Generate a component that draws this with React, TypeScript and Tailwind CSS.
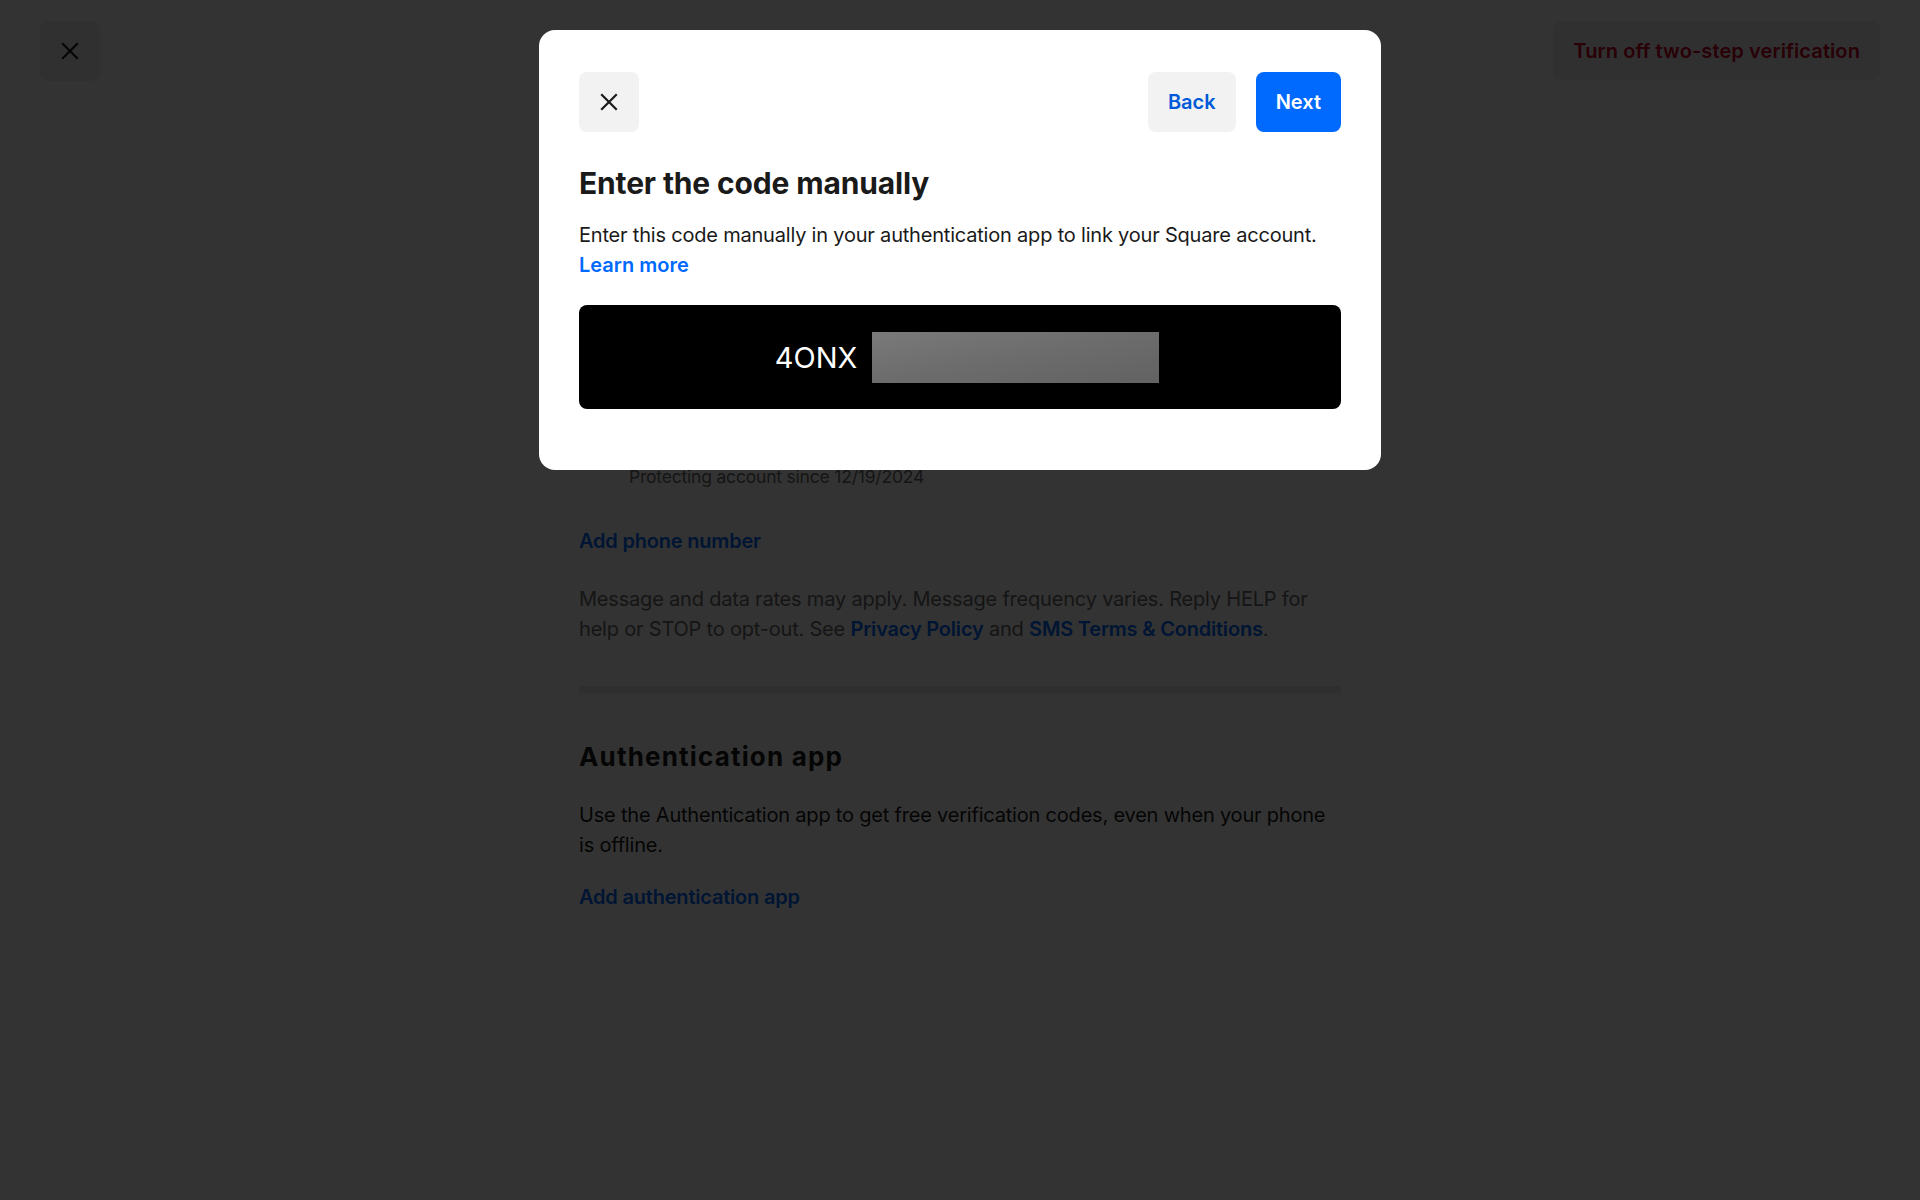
import React from "react";

function CloseIcon({ className = "" }: { className?: string }) {
  return (
    <svg width="18" height="18" viewBox="0 0 18 18" fill="none" className={className}>
      <path d="M2 2L16 16M16 2L2 16" stroke="currentColor" strokeWidth="2.2" strokeLinecap="square" />
    </svg>
  );
}

function SettingsPage() {
  return (
    <div className="min-h-screen w-full bg-white text-[#1a1a1a] tracking-[-0.2px]">
      <header className="flex items-start justify-between px-10 pt-[21px]">
        <button className="flex h-[60px] w-[60px] items-center justify-center rounded-lg bg-[#f0f0f0] text-[#1a1a1a]">
          <CloseIcon />
        </button>
        <button className="h-[59px] rounded-lg bg-[#f0f0f0] px-5 text-[20px] font-semibold tracking-[0.1px] text-[#cc0023]">
          Turn off two-step verification
        </button>
      </header>

      <main className="mx-auto w-[762px]">
        {/* phone row, mostly under the modal */}
        <div className="mt-[357px] flex gap-[20px]">
          <div className="h-[30px] w-[30px]" />
          <div>
            <p className="text-[20px] font-medium leading-[26px]">(•••) •••-4821</p>
            <p className="text-[17.5px] leading-[26px] text-[#6a6a6a]">Protecting account since 12/19/2024</p>
          </div>
        </div>

        <a className="mt-[36px] block text-[20px] font-semibold leading-[30px] text-[#006aff]">Add phone number</a>

        <p className="mt-[28px] text-[20px] leading-[30px] text-[#6a6a6a]">
          Message and data rates may apply. Message frequency varies. Reply HELP for help or STOP to opt-out. See{" "}
          <span className="font-semibold text-[#006aff]">Privacy Policy</span> and{" "}
          <span className="font-semibold text-[#006aff]">SMS Terms &amp; Conditions</span>.
        </p>

        <div className="mt-[42px] h-[7px] bg-[#ececec]" />

        <h2 className="mt-[48px] text-[26px] font-bold leading-[32px] tracking-[0.045em]">Authentication app</h2>
        <p className="mt-[27px] text-[20px] leading-[30px]">
          Use the Authentication app to get free verification codes, even when your phone is offline.
        </p>
        <a className="mt-[22px] block text-[20px] font-semibold leading-[30px] text-[#006aff]">Add authentication app</a>
      </main>
    </div>
  );
}

function ManualCodeModal() {
  return (
    <div className="fixed inset-0 bg-black/80">
      <div className="mx-auto mt-[30px] w-[842px] rounded-[16px] bg-white px-10 pb-[61px] pt-[42px]">
        <div className="flex items-center justify-between">
          <button className="flex h-[60px] w-[60px] items-center justify-center rounded-lg bg-[#f2f2f2] text-[#1a1a1a]">
            <CloseIcon />
          </button>
          <div className="flex gap-5">
            <button className="h-[60px] rounded-lg bg-[#f2f2f2] px-5 text-[20px] font-semibold text-[#005ad9]">
              Back
            </button>
            <button className="h-[60px] rounded-lg bg-[#006aff] px-5 text-[20px] font-semibold text-white">
              Next
            </button>
          </div>
        </div>

        <h2 className="mt-[33px] text-[30px] font-bold leading-[36px] tracking-[-0.005em] text-[#1a1a1a]">
          Enter the code manually
        </h2>
        <p className="mt-[19px] text-[20px] leading-[30px] tracking-[-0.2px] text-[#1a1a1a]">
          Enter this code manually in your authentication app to link your Square account.
        </p>
        <a className="block text-[20px] font-semibold leading-[30px] text-[#006aff]">Learn more</a>

        <div className="mt-[25px] flex h-[104px] items-center justify-center gap-[15px] rounded-lg bg-black pl-[14px]">
          <span className="text-[29px] leading-none text-white">4ONX</span>
          <div className="h-[51px] w-[287px] bg-gradient-to-br from-[#7a7a7a] via-[#6c6c6c] to-[#626262]" />
        </div>
      </div>
    </div>
  );
}

export default function App() {
  return (
    <div className="relative font-['Inter','Noto_Sans',sans-serif]">
      <SettingsPage />
      <ManualCodeModal />
    </div>
  );
}
